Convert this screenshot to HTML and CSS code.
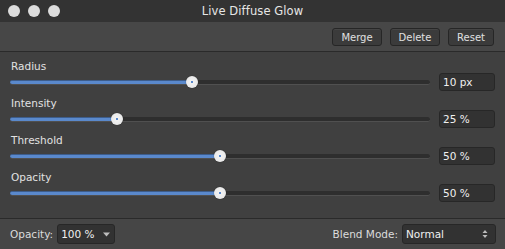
FILE: index.html
```html
<!DOCTYPE html>
<html>
<head>
<meta charset="utf-8">
<link rel="stylesheet" href="styles.css">
</head>
<body>
<div class="window">
  <div class="titlebar">
    <div class="lights"><span class="light"></span><span class="light"></span><span class="light"></span></div>
    <div class="title">Live Diffuse Glow</div>
  </div>
  <div class="toolbar">
    <button class="btn btn-merge">Merge</button>
    <button class="btn btn-delete">Delete</button>
    <button class="btn btn-reset">Reset</button>
  </div>
  <div class="content">
    <div class="row">
      <div class="label">Radius</div>
      <div class="control">
        <div class="slider"><div class="fill" style="width:43.3%"><span class="thumb"></span></div></div>
        <div class="value">10 px</div>
      </div>
    </div>
    <div class="row">
      <div class="label">Intensity</div>
      <div class="control">
        <div class="slider"><div class="fill" style="width:25.5%"><span class="thumb"></span></div></div>
        <div class="value">25 %</div>
      </div>
    </div>
    <div class="row">
      <div class="label">Threshold</div>
      <div class="control">
        <div class="slider"><div class="fill" style="width:50%"><span class="thumb"></span></div></div>
        <div class="value">50 %</div>
      </div>
    </div>
    <div class="row">
      <div class="label">Opacity</div>
      <div class="control">
        <div class="slider"><div class="fill" style="width:50%"><span class="thumb"></span></div></div>
        <div class="value">50 %</div>
      </div>
    </div>
  </div>
  <div class="footer">
    <div class="group">
      <span class="flabel">Opacity:</span>
      <div class="select select-opacity"><span>100 %</span>
        <svg class="caret" width="7" height="5" viewBox="0 0 7 5"><path d="M0 0.5 L7 0.5 L3.5 4.5 Z" fill="#bdbdbd"/></svg>
      </div>
    </div>
    <div class="group">
      <span class="flabel">Blend Mode:</span>
      <div class="select select-blend"><span>Normal</span>
        <svg class="updown" width="6" height="10" viewBox="0 0 6 10"><path d="M0.5 4 L5.5 4 L3 1 Z M0.5 6 L5.5 6 L3 9 Z" fill="#bdbdbd"/></svg>
      </div>
    </div>
  </div>
</div>
</body>
</html>
```
FILE: styles.css
```css
* { box-sizing: border-box; }
html, body { margin: 0; padding: 0; }
body {
  width: 505px;
  height: 249px;
  overflow: hidden;
  background: #404040;
  font-family: "DejaVu Sans", "Liberation Sans", sans-serif;
  font-size: 10.5px;
  color: #e2e2e2;
}
.window {
  display: flex;
  flex-direction: column;
  height: 249px;
}
.titlebar {
  height: 22px;
  background: #333333;
  position: relative;
  display: flex;
  align-items: center;
  justify-content: center;
}
.lights {
  position: absolute;
  left: 8px;
  top: 5px;
  display: flex;
  gap: 8px;
}
.light {
  width: 12px;
  height: 12px;
  border-radius: 50%;
  background: #dcdcdc;
}
.title {
  font-size: 11.5px;
  color: #e6e6e6;
  letter-spacing: 0.1px;
}
.toolbar {
  height: 30px;
  background: #474747;
  border-bottom: 1px solid #2a2a2a;
  display: flex;
  justify-content: flex-end;
  align-items: center;
  gap: 8px;
  padding: 1px 11px 0 0;
}
.btn {
  height: 18px;
  padding: 0;
  background: #3b3b3b;
  border: 1px solid #262626;
  border-radius: 3px;
  color: #e0e0e0;
  font-family: inherit;
  font-size: 10px;
  box-shadow: inset 0 1px 0 rgba(255,255,255,0.05);
}
.btn-merge { width: 50px; }
.btn-delete { width: 50px; }
.btn-reset { width: 46px; }
.content {
  flex: 1;
  background: #404040;
  padding: 7px 10px 0 10px;
  display: flex;
  flex-direction: column;
  gap: 5px;
}
.row {
  display: flex;
  flex-direction: column;
}
.label {
  height: 14px;
  line-height: 14px;
  color: #e2e2e2;
  padding-left: 1px;
}
.control {
  display: flex;
  align-items: center;
  gap: 9px;
  height: 18px;
}
.slider {
  flex: 1;
  height: 5px;
  background: #2e2e2e;
  border-radius: 3px;
  border-bottom: 1px solid #505050;
  position: relative;
}
.fill {
  height: 4px;
  background: #5a89cc;
  border-radius: 2px;
  position: relative;
  border-top: 1px solid #3d5d8c;
}
.thumb {
  position: absolute;
  right: -6px;
  top: -5px;
  width: 12px;
  height: 12px;
  border-radius: 50%;
  background: radial-gradient(circle, #5a89cc 0, #5a89cc 1px, #f1f1f1 1.5px, #e4e4e4 100%);
  box-shadow: 0 0 1px rgba(0,0,0,0.6);
}
.value {
  width: 56px;
  height: 18px;
  background: #323232;
  border: 1px solid #272727;
  border-radius: 3px;
  color: #f0f0f0;
  line-height: 16px;
  padding-left: 3px;
  font-size: 10.5px;
}
.footer {
  height: 31px;
  background: #464646;
  border-top: 1px solid #2a2a2a;
  display: flex;
  justify-content: space-between;
  align-items: center;
  padding: 0 9px 0 10px;
}
.group {
  display: flex;
  align-items: center;
  gap: 4px;
}
.flabel { color: #dcdcdc; }
.select {
  height: 20px;
  background: #323232;
  border: 1px solid #272727;
  border-radius: 3px;
  display: flex;
  align-items: center;
  justify-content: space-between;
  padding: 0 6px 0 3px;
  color: #f0f0f0;
}
.select-opacity { width: 58px; padding-right: 4px; }
.select-blend { width: 94px; padding-right: 7px; }
```
